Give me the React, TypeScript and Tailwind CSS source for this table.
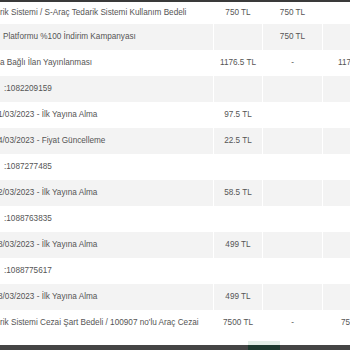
const rows: { label: string; pad?: string; a?: string; b?: string; c?: string }[] = [
  { label: 'rik Sistemi / S-Araç Tedarik Sistemi Kullanım Bedeli', a: '750 TL', b: '750 TL' },
  { label: 'Platformu %100 İndirim Kampanyası', pad: 'pl-[3px]', b: '750 TL' },
  { label: 'a Bağlı İlan Yayınlanması', a: '1176.5 TL', b: '-', c: '1176.5 TL' },
  { label: ':1082209159', pad: 'pl-[4px]' },
  { label: '1/03/2023 - İlk Yayına Alma', pad: '-ml-[2px]', a: '97.5 TL' },
  { label: '4/03/2023 - Fiyat Güncelleme', pad: '-ml-[2px]', a: '22.5 TL' },
  { label: ':1087277485', pad: 'pl-[4px]' },
  { label: '2/03/2023 - İlk Yayına Alma', pad: '-ml-[2px]', a: '58.5 TL' },
  { label: ':1088763835', pad: 'pl-[4px]' },
  { label: '8/03/2023 - İlk Yayına Alma', pad: '-ml-[2px]', a: '499 TL' },
  { label: ':1088775617', pad: 'pl-[4px]' },
  { label: '8/03/2023 - İlk Yayına Alma', pad: '-ml-[2px]', a: '499 TL' },
  { label: 'rik Sistemi Cezai Şart Bedeli / 100907 no\'lu Araç Cezai', a: '7500 TL', b: '-', c: '7500 TL' },
];

export default function App() {
  return (
    <div
      className="w-[350px] h-[350px] overflow-hidden bg-white flex flex-col text-[8.2px] text-[#555]"
      style={{ fontFamily: '"Liberation Sans", Arial, sans-serif' }}
    >
      {/* üst bar */}
      <div className="h-[2px] shrink-0 bg-[#3a3a3a]" />

      {/* tablo */}
      <div className="flex flex-col w-[390px] shrink-0">
        {rows.map((row, i) => {
          const bg = i % 2 === 1 ? 'bg-[#f3f3f3]' : 'bg-white';
          const h = i === 0 ? 'h-[22px]' : 'h-[26px]';
          return (
            <div key={i} className={`grid grid-cols-[213px_48px_59px_66px] gap-x-px ${h}`}>
              <div className={`${bg} flex items-center whitespace-nowrap overflow-hidden`}>
                <span className={row.pad ?? ''}>{row.label}</span>
              </div>
              <div className={`${bg} flex items-center justify-center whitespace-nowrap`}>{row.a}</div>
              <div className={`${bg} flex items-center justify-center whitespace-nowrap`}>{row.b}</div>
              <div className={`${bg} flex items-center justify-center whitespace-nowrap`}>{row.c}</div>
            </div>
          );
        })}
      </div>

      {/* boşluk */}
      <div className="flex-1 flex items-end pl-[248px]">
        <div className="w-[32px] h-[4px] bg-[#e4efe8]" />
      </div>

      {/* alt bar */}
      <div className="h-[5px] shrink-0 bg-[#454545] flex pl-[248px]">
        <div className="w-[32px] bg-[#1f3a2f]" />
      </div>
    </div>
  );
}
